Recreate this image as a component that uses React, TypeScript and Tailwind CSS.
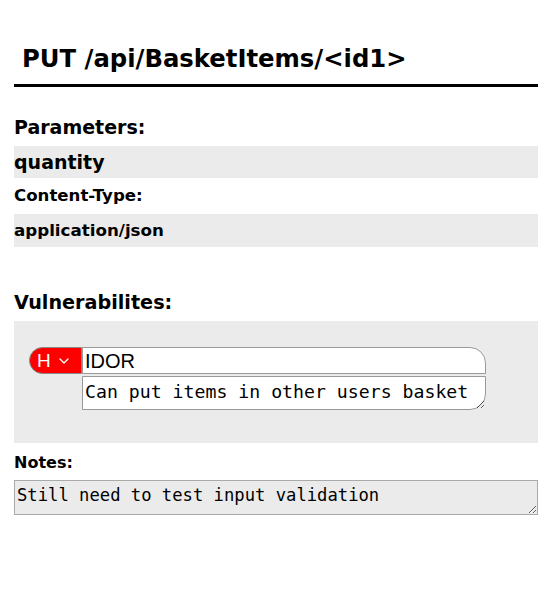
import { ChevronDown } from 'lucide-react';

export default function App() {
  return (
    <div className="w-[552px] h-[589px] bg-white px-[14px] pt-[44px] font-['DejaVu_Sans',Verdana,sans-serif] text-black">
      <h1 className="px-2 text-[24.3px] font-bold leading-[30px]">PUT /api/BasketItems/&lt;id1&gt;</h1>
      <div className="mt-[10px] h-[3px] bg-black" />

      <h2 className="mt-[28px] text-[19px] font-bold leading-[24px]">Parameters:</h2>
      <div className="mt-[7px] flex h-[32px] items-center bg-[#ebebeb] text-[19px] font-bold">quantity</div>
      <div className="flex h-[36px] items-center text-[16.6px] font-bold">Content-Type:</div>
      <div className="flex h-[33px] items-center bg-[#ebebeb] text-[16.7px] font-bold">application/json</div>

      <h2 className="mt-[44px] text-[19.2px] font-bold leading-[24px]">Vulnerabilites:</h2>
      <div className="mt-[6px] h-[122px] bg-[#ebebeb] pl-[15px] pt-[26px]">
        <div className="flex">
          <div className="flex h-[27px] w-[53px] items-center gap-[5px] rounded-l-full border border-[#888] bg-[#ff0000] pl-[7px] text-white">
            <span className="font-['Liberation_Sans',Arial,sans-serif] text-[19px] leading-none">H</span>
            <ChevronDown size={16} strokeWidth={2} />
          </div>
          <div className="flex flex-col">
            <div className="flex h-[27px] w-[404px] items-center rounded-tr-[16px] border border-[#999] bg-white pl-[2px] font-['Liberation_Sans',Arial,sans-serif] text-[20px]">
              IDOR
            </div>
            <textarea
              className="mt-[2px] h-[34px] w-[404px] resize rounded-br-[16px] border border-[#999] bg-white px-[2px] pt-[4px] font-['DejaVu_Sans_Mono',monospace] text-[18.2px] leading-[22px] outline-none"
              defaultValue="Can put items in other users basket"
            />
          </div>
        </div>
      </div>

      <div className="mt-[10px] text-[16px] font-bold leading-[20px]">Notes:</div>
      <textarea
        className="mt-[7px] block h-[35px] w-full resize border border-[#aaa] bg-[#ebebeb] px-[2px] pt-[3px] font-['DejaVu_Sans_Mono',monospace] text-[17.2px] leading-[22px] outline-none"
        defaultValue="Still need to test input validation"
      />
    </div>
  );
}
